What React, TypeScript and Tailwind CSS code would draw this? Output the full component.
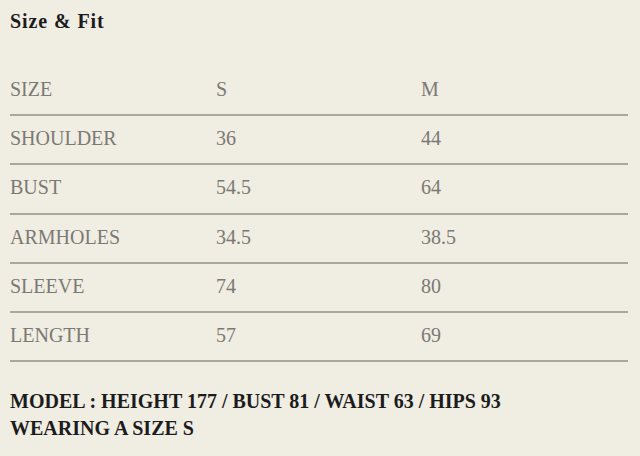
const rows = [
  ['SHOULDER', '36', '44'],
  ['BUST', '54.5', '64'],
  ['ARMHOLES', '34.5', '38.5'],
  ['SLEEVE', '74', '80'],
  ['LENGTH', '57', '69'],
];

export default function App() {
  return (
    <div className="h-[456px] w-[640px] bg-[#f0ede3] pl-[10px] pr-[12px] font-['Liberation_Serif',serif]">
      <h2 className="pt-[8px] h-[66px] text-[20px] leading-[26px] font-bold tracking-[0.9px] text-[#1c1c1c]">Size &amp; Fit</h2>
      <table className="w-full border-collapse text-[20px] text-[#7b7974]">
        <tbody>
          <tr className="h-[49.2px] border-b-2 border-[#aaa79d]">
            <td className="w-[206px] pb-[3px]">SIZE</td>
            <td className="w-[205px] pb-[3px]">S</td>
            <td className="pb-[3px]">M</td>
          </tr>
          {rows.map((r) => (
            <tr key={r[0]} className="h-[49.2px] border-b-2 border-[#aaa79d]">
              <td className="pb-[3px]">{r[0]}</td>
              <td className="pb-[3px]">{r[1]}</td>
              <td className="pb-[3px]">{r[2]}</td>
            </tr>
          ))}
        </tbody>
      </table>
      <div className="pt-[26px] text-[20px] leading-[27px] font-bold text-[#1c1c1c]">
        <p>MODEL : HEIGHT 177 / BUST 81 / WAIST 63 / HIPS 93</p>
        <p>WEARING A SIZE S</p>
      </div>
    </div>
  );
}
